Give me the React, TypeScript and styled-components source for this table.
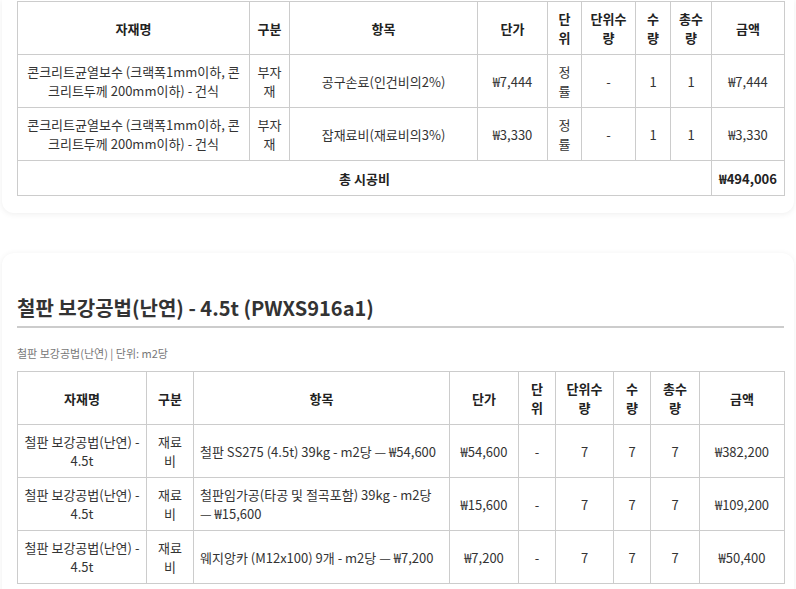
import styled, { createGlobalStyle } from 'styled-components'

const GlobalStyle = createGlobalStyle`
  html, body {
    margin: 0;
    padding: 0;
    background: #fff;
    font-family: 'Noto Sans CJK KR', 'Noto Sans', sans-serif;
    color: #333;
  }
`

const Page = styled.div`
  padding: 0 2px 40px;
  display: flex;
  flex-direction: column;
  gap: 40px;
`

const Card = styled.section<{ $clipped?: boolean }>`
  background: #fff;
  border-radius: ${({ $clipped }) => ($clipped ? '0 0 12px 12px' : '12px')};
  box-shadow: 0 1px 6px rgba(0, 0, 0, 0.07);
  padding: ${({ $clipped }) => ($clipped ? '1px 10px 17px 15px' : '40px 10px 17px 15px')};
`

const Title = styled.h2`
  margin: 0;
  padding-bottom: 3px;
  border-bottom: 2px solid #ccc;
  font-size: 20px;
  line-height: 30px;
  font-weight: 700;
  color: #333;
`

const SubInfo = styled.div`
  margin: 17px 0 10px;
  font-size: 11px;
  line-height: 16px;
  color: #777;
`

const Table = styled.table`
  width: 767px;
  border-collapse: collapse;
  table-layout: fixed;
  font-size: 13px;
  line-height: 19px;
`

const Th = styled.th`
  border: 1px solid #ccc;
  padding: 7px 6px;
  font-weight: 700;
  color: #222;
  text-align: center;
  white-space: pre-line;
`

const Td = styled.td<{ $align?: 'left' | 'center'; $bold?: boolean }>`
  border: 1px solid #ccc;
  padding: 7px 6px;
  color: ${({ $bold }) => ($bold ? '#222' : '#333')};
  font-weight: ${({ $bold }) => ($bold ? 700 : 400)};
  text-align: ${({ $align }) => $align || 'center'};
`

const TotalCell = styled(Td)`
  padding: 8px 6px 7px;
`

interface Row {
  name: string
  kind: string
  item: string
  price: string
  unit: string
  unitQty: string
  qty: string
  totalQty: string
  amount: string
}

const headers = ['자재명', '구분', '항목', '단가', '단\n위', '단위수\n량', '수\n량', '총수\n량', '금액']

const crackRows: Row[] = [
  {
    name: '콘크리트균열보수 (크랙폭1mm이하, 콘크리트두께 200mm이하) - 건식',
    kind: '부자재',
    item: '공구손료(인건비의2%)',
    price: '₩7,444',
    unit: '정률',
    unitQty: '-',
    qty: '1',
    totalQty: '1',
    amount: '₩7,444',
  },
  {
    name: '콘크리트균열보수 (크랙폭1mm이하, 콘크리트두께 200mm이하) - 건식',
    kind: '부자재',
    item: '잡재료비(재료비의3%)',
    price: '₩3,330',
    unit: '정률',
    unitQty: '-',
    qty: '1',
    totalQty: '1',
    amount: '₩3,330',
  },
]

const plateRows: Row[] = [
  {
    name: '철판 보강공법(난연) - 4.5t',
    kind: '재료비',
    item: '철판 SS275 (4.5t) 39kg - m2당 — ₩54,600',
    price: '₩54,600',
    unit: '-',
    unitQty: '7',
    qty: '7',
    totalQty: '7',
    amount: '₩382,200',
  },
  {
    name: '철판 보강공법(난연) - 4.5t',
    kind: '재료비',
    item: '철판임가공(타공 및 절곡포함) 39kg - m2당 — ₩15,600',
    price: '₩15,600',
    unit: '-',
    unitQty: '7',
    qty: '7',
    totalQty: '7',
    amount: '₩109,200',
  },
  {
    name: '철판 보강공법(난연) - 4.5t',
    kind: '재료비',
    item: '웨지앙카 (M12x100) 9개 - m2당 — ₩7,200',
    price: '₩7,200',
    unit: '-',
    unitQty: '7',
    qty: '7',
    totalQty: '7',
    amount: '₩50,400',
  },
]

interface CostTableProps {
  widths: number[]
  rows: Row[]
  itemAlign?: 'left' | 'center'
  total?: string
}

const CostTable = ({ widths, rows, itemAlign = 'center', total }: CostTableProps) => {
  return (
    <Table>
      <colgroup>
        {widths.map((w, i) => (
          <col key={i} style={{ width: w }} />
        ))}
      </colgroup>
      <thead>
        <tr>
          {headers.map((h) => (
            <Th key={h}>{h}</Th>
          ))}
        </tr>
      </thead>
      <tbody>
        {rows.map((r, i) => (
          <tr key={i}>
            <Td>{r.name}</Td>
            <Td>{r.kind}</Td>
            <Td $align={itemAlign}>{r.item}</Td>
            <Td>{r.price}</Td>
            <Td>{r.unit}</Td>
            <Td>{r.unitQty}</Td>
            <Td>{r.qty}</Td>
            <Td>{r.totalQty}</Td>
            <Td>{r.amount}</Td>
          </tr>
        ))}
        {
          total &&
          <tr>
            <TotalCell colSpan={8} $bold>총 시공비</TotalCell>
            <TotalCell $bold>{total}</TotalCell>
          </tr>
        }
      </tbody>
    </Table>
  )
}

const App = () => {
  return (
    <>
      <GlobalStyle />
      <Page>
        <Card $clipped>
          <CostTable
            widths={[232, 40, 188, 70, 34, 54, 35, 41, 73]}
            rows={crackRows}
            total="₩494,006"
          />
        </Card>
        <Card>
          <Title>철판 보강공법(난연) - 4.5t (PWXS916a1)</Title>
          <SubInfo>철판 보강공법(난연) | 단위: m2당</SubInfo>
          <CostTable
            widths={[129, 47, 256, 69, 37, 58, 37, 49, 85]}
            rows={plateRows}
            itemAlign="left"
          />
        </Card>
      </Page>
    </>
  )
}

export default App
